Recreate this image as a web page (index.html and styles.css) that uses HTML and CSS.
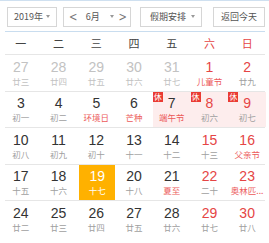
FILE: index.html
```html
<!DOCTYPE html>
<html lang="zh-CN">
<head>
<meta charset="utf-8">
<link rel="stylesheet" href="styles.css">
</head>
<body>
<div class="cal">
  <div class="bar">
    <div class="sel year"><span class="txt">2019年</span><span class="arrow"></span></div>
    <div class="sel month"><span class="nav">&lt;</span><span class="txt">6月</span><span class="arrow"></span><span class="nav">&gt;</span></div>
    <div class="sel hol"><span class="txt">假期安排</span><span class="arrow"></span></div>
    <div class="btn">返回今天</div>
  </div>
  <div class="week">
    <span>一</span><span>二</span><span>三</span><span>四</span><span>五</span><span class="we">六</span><span class="we">日</span>
  </div>
  <div class="row">
    <div class="cell other"><b>27</b><i>廿三</i></div>
    <div class="cell other"><b>28</b><i>廿四</i></div>
    <div class="cell other"><b>29</b><i>廿五</i></div>
    <div class="cell other"><b>30</b><i>廿六</i></div>
    <div class="cell other"><b>31</b><i>廿七</i></div>
    <div class="cell we"><b>1</b><i class="fest">儿童节</i></div>
    <div class="cell we"><b>2</b><i>廿九</i></div>
  </div>
  <div class="row">
    <div class="cell"><b>3</b><i>初一</i></div>
    <div class="cell"><b>4</b><i>初二</i></div>
    <div class="cell"><b>5</b><i class="fest">环境日</i></div>
    <div class="cell"><b>6</b><i class="fest">芒种</i></div>
    <div class="cell rest"><span class="badge">休</span><b>7</b><i class="fest">端午节</i></div>
    <div class="cell we rest"><span class="badge">休</span><b>8</b><i>初六</i></div>
    <div class="cell we rest"><span class="badge">休</span><b>9</b><i>初七</i></div>
  </div>
  <div class="row">
    <div class="cell"><b>10</b><i>初八</i></div>
    <div class="cell"><b>11</b><i>初九</i></div>
    <div class="cell"><b>12</b><i>初十</i></div>
    <div class="cell"><b>13</b><i>十一</i></div>
    <div class="cell"><b>14</b><i>十二</i></div>
    <div class="cell we"><b>15</b><i>十三</i></div>
    <div class="cell we"><b>16</b><i class="fest">父亲节</i></div>
  </div>
  <div class="row">
    <div class="cell"><b>17</b><i>十五</i></div>
    <div class="cell"><b>18</b><i>十六</i></div>
    <div class="cell today"><b>19</b><i>十七</i></div>
    <div class="cell"><b>20</b><i>十八</i></div>
    <div class="cell"><b>21</b><i class="fest">夏至</i></div>
    <div class="cell we"><b>22</b><i>二十</i></div>
    <div class="cell we"><b>23</b><i class="fest">奥林匹...</i></div>
  </div>
  <div class="row last">
    <div class="cell"><b>24</b><i>廿二</i></div>
    <div class="cell"><b>25</b><i>廿三</i></div>
    <div class="cell"><b>26</b><i>廿四</i></div>
    <div class="cell"><b>27</b><i>廿五</i></div>
    <div class="cell"><b>28</b><i>廿六</i></div>
    <div class="cell we"><b>29</b><i>廿七</i></div>
    <div class="cell we"><b>30</b><i>廿八</i></div>
  </div>
</div>
</body>
</html>
```

FILE: styles.css
```css
* { box-sizing: border-box; margin: 0; padding: 0; }
body {
  margin: 0;
  background: #fff;
  font-family: "Liberation Sans", Arial, "Noto Sans CJK SC", sans-serif;
  color: #333;
}
.cal {
  width: 269px;
  border-top: 1px solid #cfe0f0;
}
.bar {
  height: 31px;
  display: flex;
  align-items: center;
  gap: 6px;
  padding-left: 7px;
  background-image: linear-gradient(#c9ddef, #c9ddef);
  background-size: calc(100% - 9px) 1px;
  background-position: 5px bottom;
  background-repeat: no-repeat;
}
.sel, .btn {
  height: 20px;
  border: 1px solid #d6d6d6;
  background: #fff;
  display: flex;
  align-items: center;
  font-size: 9px;
  color: #555;
  font-family: "Noto Sans CJK SC", "Liberation Sans", sans-serif;
}
.year { width: 50px; padding: 0 6px 0 6px; justify-content: space-between; }
.month { width: 68px; padding: 0 3px 0 5px; justify-content: space-between; }
.month .txt { margin-left: 4px; }
.month .arrow { margin-left: 6px; }
.nav { color: #777; font-size: 10px; font-family: "DejaVu Sans", sans-serif; transform: scaleY(1.2); }
.hol { width: 62px; padding: 0 6px 0 9px; justify-content: space-between; margin-left: 3px; }
.btn { width: 52px; justify-content: center; margin-left: 5px; }
.arrow {
  width: 0; height: 0;
  border-left: 2.5px solid transparent;
  border-right: 2.5px solid transparent;
  border-top: 3px solid #999;
}
.week {
  height: 23px;
  display: grid;
  grid-template-columns: repeat(7, 1fr);
  padding: 0 3px 1px 2px;
  align-items: center;
  text-align: center;
  font-size: 11px;
  font-family: "Noto Sans CJK SC", sans-serif;
  color: #444;
  background-image: linear-gradient(#e6e6e6, #e6e6e6);
  background-size: calc(100% - 9px) 1px;
  background-position: 5px bottom;
  background-repeat: no-repeat;
}
.week .we { color: #e54545; }
.row {
  height: 36.5px;
  display: grid;
  grid-template-columns: repeat(7, 1fr);
  padding: 0 3px 1px 2px;
  background-image: linear-gradient(#e6e6e6, #e6e6e6);
  background-size: calc(100% - 9px) 1px;
  background-position: 5px bottom;
  background-repeat: no-repeat;
}
.row.last { background-image: none; }
.cell {
  position: relative;
  display: flex;
  flex-direction: column;
  align-items: center;
  padding-top: 3.5px;
  min-width: 0;
}
.cell b {
  font-weight: normal;
  font-size: 14px;
  line-height: 16px;
  color: #333;
  font-family: "Liberation Sans", Arial, sans-serif;
}
.cell i {
  font-style: normal;
  font-size: 8.5px;
  line-height: 12.5px;
  color: #a0a0a0;
  font-family: "Noto Sans CJK SC", sans-serif;
  white-space: nowrap;
}
.cell.we b { color: #e54545; }
.cell i.fest { color: #ec5a5a; }
.cell.other b, .cell.other i { color: #c2c2c2; }
.cell.rest { background: #fdeded; }
.cell.today { background: #ffb100; margin-left: 2px; }
.cell.today b, .cell.today i { color: #fff; }
.badge {
  position: absolute;
  left: 0; top: 0;
  width: 10px; height: 10px;
  background: #ea3b33;
  color: #fff;
  font-size: 8px;
  line-height: 10px;
  text-align: center;
  font-family: "Noto Sans CJK SC", sans-serif;
}
```
